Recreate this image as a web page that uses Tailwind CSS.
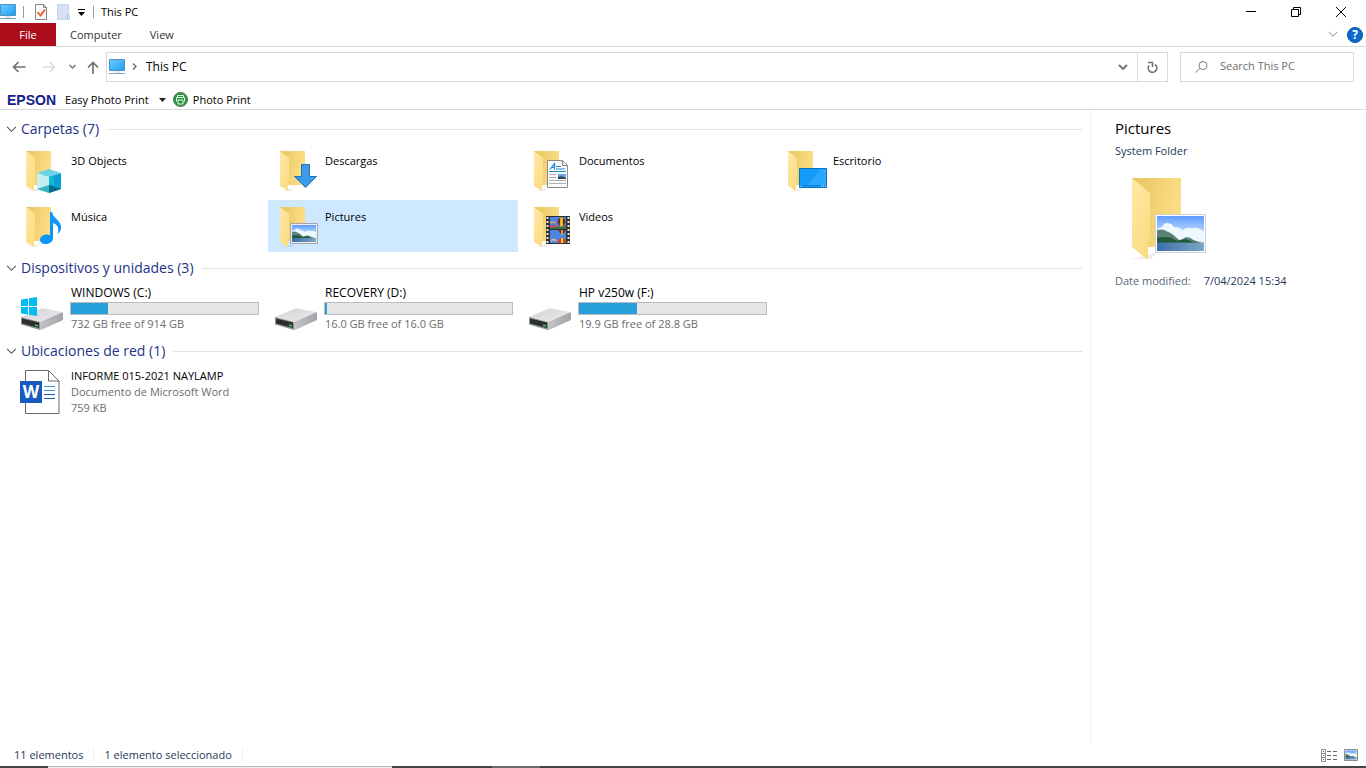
<!DOCTYPE html>
<html lang="es">
<head>
<meta charset="utf-8">
<title>This PC</title>
<script src="https://cdn.jsdelivr.net/npm/@tailwindcss/browser@4"></script>
</head>
<body class="bg-white font-['Open_Sans','Noto_Sans',sans-serif] text-[11px] leading-4 text-black">
<svg class="absolute size-0" aria-hidden="true">
  <defs>
    <linearGradient id="back" x1="0" y1="0.3" x2="1" y2="0.6"><stop offset="0" stop-color="#e9c662"/><stop offset="1" stop-color="#fde08a"/></linearGradient>
    <linearGradient id="flap" x1="0" y1="0" x2="0.6" y2="1"><stop offset="0" stop-color="#ffe9a6"/><stop offset="1" stop-color="#fcdc84"/></linearGradient>
    <linearGradient id="screen" x1="0" y1="0" x2="1" y2="1"><stop offset="0" stop-color="#6fcbff"/><stop offset="1" stop-color="#1f9cf5"/></linearGradient>
    <linearGradient id="sky" x1="0" y1="0" x2="0" y2="1"><stop offset="0" stop-color="#5f9bff"/><stop offset="0.6" stop-color="#d5ecff"/></linearGradient>
    <linearGradient id="sea" x1="0" y1="0" x2="1" y2="0"><stop offset="0" stop-color="#3a6fa8"/><stop offset="1" stop-color="#7fa6c4"/></linearGradient>
    <linearGradient id="drivetop" x1="0" y1="0" x2="1" y2="1"><stop offset="0" stop-color="#d2d3d6"/><stop offset="1" stop-color="#ececee"/></linearGradient>
    <linearGradient id="driveside" x1="0" y1="0" x2="1" y2="0"><stop offset="0" stop-color="#c4c5c8"/><stop offset="1" stop-color="#a2a3a7"/></linearGradient>
    <symbol id="folder" viewBox="0 0 48 48">
      <path d="M8 45h11l4-3z" fill="#000" opacity=".07"/>
      <path d="M8 5h25v34H8z" fill="url(#back)"/>
      <path d="M8 5l9 7v22l-1 3v8l-8-5z" fill="url(#flap)"/>
    </symbol>
    <symbol id="photo" viewBox="0 0 51 38" preserveAspectRatio="none">
      <path d="M.5.500h50v37H.5z" fill="#fff" stroke="#cfd1d4"/>
      <path d="M2 2h47v34H2z" fill="url(#sky)"/>
      <path d="M2 17q2-5 5-4q2-5 6-4q4 0 6 4q6-1 8 3q5-4 10-2q6-2 12 3v10H2z" fill="#eef8ff"/>
      <path d="M2 16q6-2 10 1q4 1 7 4l6 5l5-3q4-1 8 2q7 3 11 3v1H2z" fill="#5d8077"/>
      <path d="M2 23q8-1 14 0l6 3q8-3 13 0l6 2H2z" fill="#215a3b"/>
      <path d="M2 28h47v8H2z" fill="url(#sea)"/>
    </symbol>
    <symbol id="pc" viewBox="0 0 16 16">
      <path d="M.5.500h15v11H.5z" fill="url(#screen)" stroke="#4a94c4"/>
      <path d="M5 13h6" stroke="#c4d3de"/><path d="M0 14.500h16" stroke="#8ba3b8"/>
    </symbol>
    <symbol id="drive" viewBox="0 0 48 48">
      <path d="M3 33l19-8q2-1 4-.5L44 28q1 .5 0 1L22 38z" fill="url(#drivetop)"/>
      <path d="M22 38l22-9.500q1 0 1 1V36L23 46l-1-.5z" fill="url(#driveside)"/>
      <path d="M3 33l19 5v8L3 40.500z" fill="#8f9194"/>
      <path d="M4 34.500l17 4v5.500L4 39.500z" fill="#2b2d2f"/>
      <path d="M17 40.500l3 .6v1.400l-3-.6z" fill="#35e04a"/>
    </symbol>
    <symbol id="chev" viewBox="0 0 12 8"><path d="M1 1l5 5 5-5" fill="none" stroke="currentColor" stroke-width="1.200"/></symbol>
  </defs>
</svg>

<div class="flex min-h-screen flex-col">
  <header>
    <div class="flex h-[23px] items-center">
      <svg class="size-4"><use href="#pc"/></svg>
      <span class="ml-[7px] h-3 w-px bg-[#9a9a9a]"></span>
      <button class="ml-[11px]" aria-label="Properties"><svg class="block h-4 w-3" viewBox="0 0 12 16"><path d="M.5.500h8l3 3v12H.5z" fill="#fafafa" stroke="#858585"/><path d="M8.500.500v3h3" fill="none" stroke="#858585"/><path d="M2.500 8l3 3.500 4.500-6" fill="none" stroke="#ee5a1c" stroke-width="1.800"/></svg></button>
      <button class="ml-[10px]" aria-label="New folder"><svg class="block h-4 w-[13px]" viewBox="0 0 13 16"><path d="M.5.500h11v9l1 1v5H.5z" fill="#d5e1f3" stroke="#c4d3ea"/><path d="M10.500 15v-4l1-1.500" fill="none" stroke="#aebfdc"/></svg></button>
      <button class="ml-[8px]" aria-label="Customize Quick Access Toolbar"><svg class="mt-[2px] block h-2 w-[7px]" viewBox="0 0 7 8"><path d="M0 .5h7" stroke="#000"/><path d="M0 3h7L3.500 7z"/></svg></button>
      <span class="ml-[8px] h-3 w-px bg-[#9a9a9a]"></span>
      <h1 class="ml-[7px]">This PC</h1>
      <div class="ml-auto flex items-center pr-[2px]">
        <button class="flex h-[22px] w-[46px] items-center justify-center" aria-label="Minimize"><svg class="h-[10px] w-[10px]" viewBox="0 0 10 10" stroke="#000"><path d="M0 4.500h10"/></svg></button>
        <button class="flex h-[22px] w-11 items-center justify-center" aria-label="Restore"><svg class="h-[10px] w-[10px]" viewBox="0 0 10 10" fill="none" stroke="#000"><path d="M.5 2.500h7v7h-7zM2.500 2.500v-2h7v7h-2"/></svg></button>
        <button class="flex h-[22px] w-[46px] items-center justify-center" aria-label="Close"><svg class="h-[10px] w-[10px]" viewBox="0 0 10 10" stroke="#000"><path d="M0 0l10 10M10 0L0 10"/></svg></button>
      </div>
    </div>

    <nav class="flex h-6 items-center border-b border-[#dadbdc] text-[#333]" aria-label="Ribbon">
      <button class="h-[23px] w-14 bg-[#ab0d1b] text-white">File</button>
      <button class="h-[23px] px-[14px]">Computer</button>
      <button class="h-[23px] px-[14px]">View</button>
      <button class="ml-auto text-[#909090]" aria-label="Expand the Ribbon"><svg class="block h-[7px] w-[10px]"><use href="#chev"/></svg></button>
      <button class="mr-[3px] ml-[9px] flex size-4 items-center justify-center rounded-full border border-[#0a4f9c] bg-[#0a6cd0] text-xs font-bold text-white" aria-label="Help">?</button>
    </nav>

    <div class="flex h-[39px] items-center pr-3 text-xs text-[#7a7a7a]">
      <button class="ml-3" aria-label="Back"><svg class="block h-3 w-[14px]" viewBox="0 0 14 12" fill="none" stroke="#6e6e6e" stroke-width="1.600"><path d="M13.500 6H1.500M6.500 1l-5 5 5 5"/></svg></button>
      <button class="ml-4" aria-label="Forward"><svg class="block h-3 w-[14px]" viewBox="0 0 14 12" fill="none" stroke="#dcdcdc" stroke-width="1.600"><path d="M.5 6h12M7.500 1l5 5-5 5"/></svg></button>
      <button class="ml-[13px]" aria-label="Recent locations"><svg class="block h-[5px] w-[7px]" viewBox="0 0 7 5" fill="none" stroke="#7a7a7a" stroke-width="1.500"><path d="M.5 1l3 3 3-3"/></svg></button>
      <button class="ml-[11px]" aria-label="Up"><svg class="mt-px block h-[13px] w-3" viewBox="0 0 12 13" fill="none" stroke="#6e6e6e" stroke-width="1.600"><path d="M6 13V1.500M1 6.500l5-5 5 5"/></svg></button>
      <div class="ml-[7px] flex h-[30px] flex-1 items-center border border-[#d9d9d9]">
        <svg class="ml-[2px] size-4"><use href="#pc"/></svg>
        <svg class="ml-[7px] h-[7px] w-[5px]" viewBox="0 0 5 7" fill="none" stroke="#666" stroke-width="1.300"><path d="M1 .5l3 3-3 3"/></svg>
        <button class="ml-[9px] text-black">This PC</button>
        <button class="ml-auto flex h-full w-7 items-center justify-center" aria-label="Previous locations"><svg class="mt-px h-[6px] w-[10px]" viewBox="0 0 10 6" fill="none" stroke="#6e6e6e" stroke-width="1.800"><path d="M1 1l4 4 4-4"/></svg></button>
        <button class="flex h-full w-[30px] items-center justify-center border-l border-[#d9d9d9]" aria-label="Refresh"><svg class="h-3 w-[11px]" viewBox="0 0 11 12" fill="none" stroke="#6e6e6e" stroke-width="1.600"><path d="M8 3.500A4.300 4.300 0 1 1 2 4.500M1 1.500h4.500v4.500"/></svg></button>
      </div>
      <label class="ml-3 flex h-[30px] w-[174px] items-center border border-[#d9d9d9]">
        <svg class="ml-[14px] h-3 w-[13px] shrink-0" viewBox="0 0 13 12" fill="none" stroke="#7e7e7e"><circle cx="8" cy="4.500" r="4"/><path d="M5 7.500L.5 11.500"/></svg>
        <input class="ml-3 w-full min-w-0 text-[11px] outline-none placeholder:text-[#6d6d6d]" type="search" placeholder="Search This PC" aria-label="Search This PC">
      </label>
    </div>

    <div class="flex h-6 items-center border-b border-[#d9d9d9] pt-[4px]" role="toolbar" aria-label="EPSON">
      <span class="ml-[7px] font-['Liberation_Sans',sans-serif] text-sm font-bold text-[#10218b]">EPSON</span>
      <button class="ml-[9px] flex items-center">Easy Photo Print<svg class="ml-[10px] h-1 w-[7px]" viewBox="0 0 7 4"><path d="M0 0h7L3.500 4z" fill="#222"/></svg></button>
      <button class="ml-[7px] flex items-center gap-[5px]"><svg class="size-[15px]" viewBox="0 0 15 15"><circle cx="7.500" cy="7.500" r="7" fill="#279b3c" stroke="#5b6b5e"/><path d="M4.500 5.500v-2h6v2M3.500 9.500v-4h8v4M5 8h5v4H5z" fill="none" stroke="#e9f7ea"/></svg>Photo Print</button>
    </div>
  </header>

  <div class="flex flex-1">
    <main class="flex-1 border-r border-[#f2f2f2] pt-2 pr-2">
      <section class="mb-[5px]">
        <h2 class="flex h-[22px] items-center pl-[6px] text-sm text-[#1e3287]"><button class="flex items-center gap-1"><svg class="h-[7px] w-[11px] text-[#555]"><use href="#chev"/></svg>Carpetas (7)</button><span class="ml-2 h-px flex-1 bg-[#e2e2e2]"></span></h2>
        <ul class="grid grid-cols-[repeat(auto-fill,250px)] gap-1 pt-1 pl-[14px]">
          <li><button class="flex h-[52px] w-full gap-[5px] pl-1 text-left"><svg class="mt-[2px] size-12" viewBox="0 0 48 48"><use href="#folder"/><path d="M19 27l12 4v16l-12-4z" fill="#c3eef2"/><path d="M19 27l12-4 12 4-12 4z" fill="#6fd3e6"/><path d="M31 31l12-4v16l-12 4z" fill="#0a9fd6"/><path d="M31 31l5-1.600v9L31 39z" fill="#10b7d4"/><path d="M19 43l12-4v8z" fill="#35b5c4"/><path d="M31 39l12 4-12 4z" fill="#076a86"/></svg><span class="pt-[9px]">3D Objects</span></button></li>
          <li><button class="flex h-[52px] w-full gap-[5px] pl-1 text-left"><svg class="mt-[2px] size-12" viewBox="0 0 48 48"><use href="#folder"/><path d="M29.500 18.500h8v12h7L33.500 41.500 22.500 30.500h7z" fill="#3d9ae8" stroke="#2274b8"/></svg><span class="pt-[9px]">Descargas</span></button></li>
          <li><button class="flex h-[52px] w-full gap-[5px] pl-1 text-left"><svg class="mt-[2px] size-12" viewBox="0 0 48 48"><use href="#folder"/><path d="M21.500 14.500h15l5 5v22h-20z" fill="#fafafa" stroke="#8a8a8a"/><path d="M36.500 14.500v5h5" fill="none" stroke="#8a8a8a"/><path d="M24 23.500l4.500-6v6M25.500 21.500h3M30 20.500h5M30 23h9" fill="none" stroke="#1d8bd3" stroke-width="1.200"/><path d="M23 25.500h17" stroke="#1d8bd3"/><path d="M23 28.500h7M23 31.500h7M23 34.500h17M23 37.500h17" stroke="#b0b0b0"/><path d="M32 28h8v5h-8z" fill="#6aa5e3"/><path d="M32 31q3-2 8 1v1h-8z" fill="#264c5c"/></svg><span class="pt-[9px]">Documentos</span></button></li>
          <li><button class="flex h-[52px] w-full gap-[5px] pl-1 text-left"><svg class="mt-[2px] size-12" viewBox="0 0 48 48"><use href="#folder"/><path d="M19.500 22.500h27v19h-27z" fill="#159bfa" stroke="#0874c0"/><path d="M28 39L41 23h5v16z" fill="#2ba8ff"/><path d="M20 39.500h26" stroke="#0b83d8"/><path d="M20.500 40h1M41 40h1M43 40h1M45 40h1" stroke="#fff"/></svg><span class="pt-[9px]">Escritorio</span></button></li>
          <li><button class="flex h-[52px] w-full gap-[5px] pl-1 text-left"><svg class="mt-[2px] size-12" viewBox="0 0 48 48"><use href="#folder"/><path d="M32 10h2c1 6 8 8 9 14 .5 4-1 6-3 8 1-6 0-9-5-11v15c0 4-4 6-7.500 6S22 40 22 37.500s3-5 6.500-5c1.500 0 2.500.3 3.500.8z" fill="#0a97f5"/></svg><span class="pt-[9px]">Música</span></button></li>
          <li><button class="flex h-[52px] w-full gap-[5px] bg-[#cde8ff] pl-1 text-left" aria-pressed="true"><svg class="mt-[2px] size-12" viewBox="0 0 48 48"><use href="#folder"/><path d="M18.500 21.500h27v20h-27z" fill="#fff" stroke="#a2a7ab"/><use href="#photo" x="19" y="22" width="26" height="19"/></svg><span class="pt-[9px]">Pictures</span></button></li>
          <li><button class="flex h-[52px] w-full gap-[5px] pl-1 text-left"><svg class="mt-[2px] size-12" viewBox="0 0 48 48"><use href="#folder"/><path d="M20 14h24v28H20z" fill="#303030"/><path d="M21.500 15v27M42.500 15v27" stroke="#e4e4e4" stroke-width="2" stroke-dasharray="2 2"/><path d="M24 15h16v12H24zM24 28h16v13H24z" fill="#4b86e0"/><path d="M24 24q4-3 7 0l3 3H24z" fill="#c74a72"/><path d="M24 21q4-2 5 0" stroke="#f0a04c" fill="none" stroke-width="1.500"/><path d="M24 26q8-1 16-2v3H24z" fill="#35753b"/><ellipse cx="35.500" cy="20" rx="4" ry="4.500" fill="#a83a23"/><path d="M35.500 15.500v9" stroke="#f5d130" stroke-width="2.500"/><path d="M33 17v5M38 17v5" stroke="#222"/><path d="M32 28h8l-3 4h-2z" fill="#7a2748"/><path d="M36 28v5" stroke="#e8c836" stroke-width="1.500"/><path d="M32 41q0-5 4-5t4 5z" fill="#d8422c"/><path d="M36 36v5" stroke="#f5d130" stroke-width="2"/><path d="M25 39q3-3 5 0" stroke="#e4b28e" stroke-width="2" fill="none"/></svg><span class="pt-[9px]">Videos</span></button></li>
        </ul>
      </section>

      <section class="mb-[5px]">
        <h2 class="flex h-[22px] items-center pl-[6px] text-sm text-[#1e3287]"><button class="flex items-center gap-1"><svg class="h-[7px] w-[11px] text-[#555]"><use href="#chev"/></svg>Dispositivos y unidades (3)</button><span class="ml-2 h-px flex-1 bg-[#e2e2e2]"></span></h2>
        <ul class="grid grid-cols-[repeat(auto-fill,250px)] gap-1 pt-1 pl-[14px]">
          <li class="flex h-[52px] gap-1 pl-1"><svg class="mt-px size-12 shrink-0" viewBox="0 0 48 48"><use href="#drive"/><path d="M3 15.500l7-1V22H3zM11 14.300l8-1.300V22h-8zM3 23h7v7.500l-7-1zM11 23h8v9l-8-1.300z" fill="#00bcf2"/></svg><div class="flex-1 pt-[2px] pr-[5px]"><p class="pl-px text-xs leading-4">WINDOWS (C:)</p><div class="mt-px h-[13px] border border-[#bcbcbc] bg-[#e6e6e6]" role="meter" aria-label="WINDOWS (C:)" aria-valuenow="20" aria-valuemin="0" aria-valuemax="100"><div class="h-full bg-[#26a0da]" style="width:20%"></div></div><p class="mt-px pl-px text-[#6d6d6d]">732 GB free of 914 GB</p></div></li>
          <li class="flex h-[52px] gap-1 pl-1"><svg class="mt-px size-12 shrink-0"><use href="#drive"/></svg><div class="flex-1 pt-[2px] pr-[5px]"><p class="pl-px text-xs leading-4">RECOVERY (D:)</p><div class="mt-px h-[13px] border border-[#bcbcbc] bg-[#e6e6e6]" role="meter" aria-label="RECOVERY (D:)" aria-valuenow="1" aria-valuemin="0" aria-valuemax="100"><div class="h-full bg-[#26a0da]" style="width:1%"></div></div><p class="mt-px pl-px text-[#6d6d6d]">16.0 GB free of 16.0 GB</p></div></li>
          <li class="flex h-[52px] gap-1 pl-1"><svg class="mt-px size-12 shrink-0"><use href="#drive"/></svg><div class="flex-1 pt-[2px] pr-[5px]"><p class="pl-px text-xs leading-4">HP v250w (F:)</p><div class="mt-px h-[13px] border border-[#bcbcbc] bg-[#e6e6e6]" role="meter" aria-label="HP v250w (F:)" aria-valuenow="31" aria-valuemin="0" aria-valuemax="100"><div class="h-full bg-[#26a0da]" style="width:31%"></div></div><p class="mt-px pl-px text-[#6d6d6d]">19.9 GB free of 28.8 GB</p></div></li>
        </ul>
      </section>

      <section>
        <h2 class="flex h-[22px] items-center pl-[6px] text-sm text-[#1e3287]"><button class="flex items-center gap-1"><svg class="h-[7px] w-[11px] text-[#555]"><use href="#chev"/></svg>Ubicaciones de red (1)</button><span class="ml-2 h-px flex-1 bg-[#e2e2e2]"></span></h2>
        <ul class="grid grid-cols-[repeat(auto-fill,250px)] gap-1 pt-1 pl-[14px]">
          <li><button class="flex h-[52px] w-full gap-[5px] pl-1 text-left"><svg class="mt-[2px] size-12" viewBox="0 0 48 48"><path d="M7.500 2.500h23l10.500 10.500v32.500H7.500z" fill="#fff" stroke="#6a6a6a"/><path d="M30.500 2.500V13H41" fill="none" stroke="#6a6a6a"/><path d="M2 13h22v22H2z" fill="#185abd"/><path d="M26 18.500h11M26 22.500h11" stroke="#3d8fe0" stroke-width="1.200"/><path d="M26 26.500h11M26 30.500h11" stroke="#185abd" stroke-width="1.200"/><text x="13" y="30" text-anchor="middle" font-family="Open Sans" font-weight="700" font-size="17" fill="#fff">W</text></svg><span class="pt-[2px]">INFORME 015-2021 NAYLAMP<span class="block text-[#6d6d6d]">Documento de Microsoft Word</span><span class="block text-[#6d6d6d]">759 KB</span></span></button></li>
        </ul>
      </section>
    </main>

    <aside class="w-[275px] px-6 pt-2">
      <h2 class="text-[15px] leading-5">Pictures</h2>
      <p class="mt-[5px] text-[#1e395b]">System Folder</p>
      <svg class="mt-[9px] size-24" viewBox="0 0 96 96"><path d="M16 91h20l5-6z" opacity=".07"/><path d="M17 2h49v69H17z" fill="url(#back)" transform="translate(0 8)"/><path d="M17 10l18 15v44l-2 4v19l-16-13z" fill="url(#flap)"/><use href="#photo" x="40" y="46" width="51" height="39"/></svg>
      <dl class="mt-[9px] flex gap-[13px]"><dt class="text-[#5a6779]">Date modified:</dt><dd class="text-[#1e395b]">7/04/2024 15:34</dd></dl>
    </aside>
  </div>

  <footer>
    <div class="flex h-[22px] items-center pl-[14px] text-[#1e395b]">
      <span>11 elementos</span><span class="ml-[10px] h-3 w-px bg-[#ececec]"></span>
      <span class="ml-[10px]">1 elemento seleccionado</span><span class="ml-[10px] h-3 w-px bg-[#ececec]"></span>
      <button class="ml-auto" aria-label="Details"><svg class="block h-[13px] w-4" viewBox="0 0 16 13" fill="none" stroke="#8d8d8d"><path d="M.5.500h4v12h-4zM.5 4.500h4M.5 8.500h4"/><path d="M6 2.500h4M12 2.500h4M6 6.500h4M12 6.500h4M6 10.500h4M12 10.500h4" stroke="#666"/><path d="M2 2.500h1" stroke="#444"/><path d="M2 6.500h1" stroke="#2e8ff0"/><path d="M2 10.500h1" stroke="#d5301c"/></svg></button>
      <button class="mr-2 ml-[7px]" aria-label="Large icons"><svg class="block h-3 w-[14px]" viewBox="0 0 14 12"><use href="#photo" x="1" y="1" width="12" height="10"/><path d="M.5.500h13v11H.5z" fill="none" stroke="#8d8d8d"/></svg></button>
    </div>
    <div class="flex h-[2px] bg-[#474443]"><span class="w-12"></span><span class="w-[344px] border-b border-[#eee] bg-[#b5b5b5]"></span><span class="w-[100px]"></span><span class="w-12 bg-[#6d6b6a]"></span></div>
  </footer>
</div>
</body>
</html>
